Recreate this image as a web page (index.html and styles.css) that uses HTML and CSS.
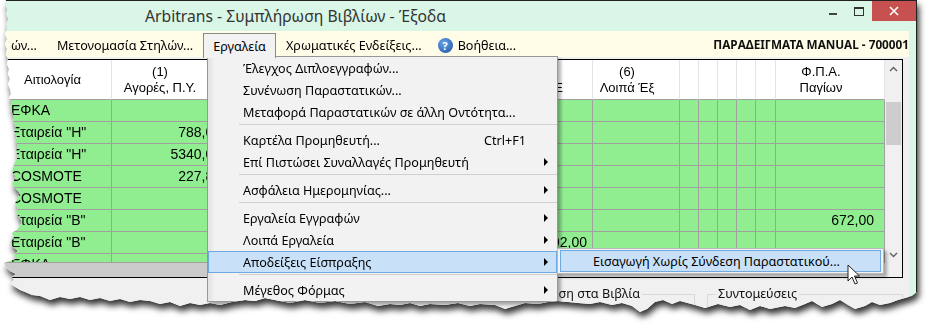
FILE: index.html
```html
<!DOCTYPE html>
<html>
<head>
    <meta charset="UTF-8">
    <title>Arbitrans - Συμπλήρωση Βιβλίων - Έξοδα</title>
    <link rel="stylesheet" href="styles.css">
</head>
<body>
<div class="shot">
    <div class="window">
        <div class="titlebar">
            <span class="title">Arbitrans - Συμπλήρωση Βιβλίων - Έξοδα</span>
            <div class="caption">
                <span class="cap_btn"><span class="min_icon"></span></span>
                <span class="cap_btn"><span class="max_icon"></span></span>
                <span class="cap_btn close">
                    <svg width="10" height="10" viewBox="0 0 10 10"><path d="M1 1 L9 9 M9 1 L1 9" stroke="#fff" stroke-width="1.6"/></svg>
                </span>
            </div>
        </div>
        <div class="client">
            <div class="menubar">
                <span class="mitem">ών...</span>
                <span class="mitem">Μετονομασία Στηλών...</span>
                <span class="mitem open">Εργαλεία</span>
                <span class="mitem">Χρωματικές Ενδείξεις...</span>
                <span class="mitem help"><span class="help_icon">?</span>Βοήθεια...</span>
                <span class="company">ΠΑΡΑΔΕΙΓΜΑΤΑ MANUAL - 700001</span>
            </div>
            <div class="grid">
                <div class="cells">
                    <div class="row head">
                        <div class="cell first">Αιτιολογία</div>
                        <div class="cell">(1)<br>Αγορές, Π.Υ.</div>
                        <div class="cell"></div>
                        <div class="cell tail"><span>&nbsp;<br>Ε</span></div>
                        <div class="cell">(6)<br>Λοιπά Έξ</div>
                        <div class="cell"></div>
                        <div class="cell"></div>
                        <div class="cell"></div>
                        <div class="cell"></div>
                        <div class="cell"></div>
                        <div class="cell">Φ.Π.Α.<br>Παγίων</div>
                    </div>
                    <div class="row">
                        <div class="cell txt">ΕΦΚΑ</div>
                        <div class="cell num"></div><div class="cell"></div><div class="cell"></div><div class="cell"></div>
                        <div class="cell"></div><div class="cell"></div><div class="cell"></div><div class="cell"></div><div class="cell"></div>
                        <div class="cell num"></div>
                    </div>
                    <div class="row">
                        <div class="cell txt">Εταιρεία "Η"</div>
                        <div class="cell num">788,00</div><div class="cell"></div><div class="cell"></div><div class="cell"></div>
                        <div class="cell"></div><div class="cell"></div><div class="cell"></div><div class="cell"></div><div class="cell"></div>
                        <div class="cell num"></div>
                    </div>
                    <div class="row">
                        <div class="cell txt">Εταιρεία "Η"</div>
                        <div class="cell num">5340,00</div><div class="cell"></div><div class="cell"></div><div class="cell"></div>
                        <div class="cell"></div><div class="cell"></div><div class="cell"></div><div class="cell"></div><div class="cell"></div>
                        <div class="cell num"></div>
                    </div>
                    <div class="row">
                        <div class="cell txt">COSMOTE</div>
                        <div class="cell num">227,80</div><div class="cell"></div><div class="cell"></div><div class="cell"></div>
                        <div class="cell"></div><div class="cell"></div><div class="cell"></div><div class="cell"></div><div class="cell"></div>
                        <div class="cell num"></div>
                    </div>
                    <div class="row">
                        <div class="cell txt">COSMOTE</div>
                        <div class="cell num"></div><div class="cell"></div><div class="cell"></div><div class="cell"></div>
                        <div class="cell"></div><div class="cell"></div><div class="cell"></div><div class="cell"></div><div class="cell"></div>
                        <div class="cell num"></div>
                    </div>
                    <div class="row">
                        <div class="cell txt">Εταιρεία "B"</div>
                        <div class="cell num"></div><div class="cell"></div><div class="cell"></div><div class="cell"></div>
                        <div class="cell"></div><div class="cell"></div><div class="cell"></div><div class="cell"></div><div class="cell"></div>
                        <div class="cell num last">672,00</div>
                    </div>
                    <div class="row">
                        <div class="cell txt">Εταιρεία "B"</div>
                        <div class="cell num"></div><div class="cell"></div><div class="cell num">1392,00</div><div class="cell"></div>
                        <div class="cell"></div><div class="cell"></div><div class="cell"></div><div class="cell"></div><div class="cell"></div>
                        <div class="cell num"></div>
                    </div>
                    <div class="row part">
                        <div class="cell txt">ΕΦΚΑ</div>
                        <div class="cell"></div><div class="cell"></div><div class="cell"></div><div class="cell"></div>
                        <div class="cell"></div><div class="cell"></div><div class="cell"></div><div class="cell"></div><div class="cell"></div>
                        <div class="cell"></div>
                    </div>
                    <div class="hscroll"><span class="hthumb"></span></div>
                </div>
                <div class="vscroll">
                    <span class="sarrow">
                        <svg width="9" height="6" viewBox="0 0 9 6"><path d="M1 5 L4.5 1.5 L8 5" fill="none" stroke="#606060" stroke-width="1.4"/></svg>
                    </span>
                    <span class="track"><span class="vthumb"></span></span>
                    <span class="sarrow">
                        <svg width="9" height="6" viewBox="0 0 9 6"><path d="M1 1 L4.5 4.5 L8 1" fill="none" stroke="#606060" stroke-width="1.4"/></svg>
                    </span>
                    <span class="corner"></span>
                </div>
            </div>
            <div class="lower">
                <div class="group left_grp">
                    <span class="legend">Καταχώρηση στα Βιβλία</span>
                    <span class="textbox"></span>
                </div>
                <div class="group right_grp">
                    <span class="legend">Συντομεύσεις</span>
                </div>
            </div>
        </div>

        <div class="dropdown">
            <div class="ditem">Έλεγχος Διπλοεγγραφών...</div>
            <div class="ditem">Συνένωση Παραστατικών...</div>
            <div class="ditem">Μεταφορά Παραστατικών σε άλλη Οντότητα...</div>
            <div class="sep"></div>
            <div class="ditem">Καρτέλα Προμηθευτή...<span class="shortcut">Ctrl+F1</span></div>
            <div class="ditem">Επί Πιστώσει Συναλλαγές Προμηθευτή<span class="arrow"></span></div>
            <div class="sep"></div>
            <div class="ditem">Ασφάλεια Ημερομηνίας...<span class="arrow"></span></div>
            <div class="sep"></div>
            <div class="ditem">Εργαλεία Εγγραφών<span class="arrow"></span></div>
            <div class="ditem">Λοιπά Εργαλεία<span class="arrow"></span></div>
            <div class="ditem hot">Αποδείξεις Είσπραξης<span class="arrow"></span></div>
            <div class="sep"></div>
            <div class="ditem">Μέγεθος Φόρμας<span class="arrow"></span></div>
        </div>

        <div class="submenu">
            <div class="ditem hot">Εισαγωγή Χωρίς Σύνδεση Παραστατικού...</div>
        </div>

        <svg class="pointer" width="14" height="22" viewBox="0 0 14 22">
            <path d="M1 1 L1 17 L5 13 L8 20 L10.5 19 L7.5 12 L12.5 12 Z" fill="#fff" stroke="#222" stroke-width="1"/>
        </svg>
    </div>
</div>
</body>
</html>
```

FILE: styles.css
```css
body{
    margin: 0;
    background-color: #ffffff;
    font-family: "Noto Sans", "Open Sans", sans-serif;
}
.shot{
    width: 920px;
    height: 327px;
    filter: drop-shadow(2px 5px 3px rgba(0, 0, 0, 0.8));
}
.window{
    position: relative;
    width: 917px;
    height: 318px;
    box-sizing: border-box;
    border-top: 1px solid #222;
    border-right: 1px solid #222;
    background-color: #d9f6e6;
    clip-path: polygon(6px 0, 917px 0, 917px 292px, 912px 296px, 905px 298px, 898px 300px, 890px 303px, 880px 305px, 872px 302px, 865px 306px, 855px 309px, 848px 305px, 840px 300px, 832px 304px, 822px 307px, 812px 301px, 805px 304px, 795px 308px, 785px 306px, 770px 309px, 760px 306px, 750px 310px, 740px 305px, 730px 307px, 718px 304px, 705px 308px, 695px 305px, 680px 301px, 672px 304px, 663px 300px, 655px 302px, 647px 309px, 640px 312px, 632px 306px, 622px 303px, 612px 305px, 600px 302px, 590px 304px, 578px 303px, 568px 302px, 558px 301px, 548px 302px, 538px 304px, 525px 303px, 515px 306px, 505px 309px, 495px 305px, 480px 304px, 470px 306px, 458px 303px, 445px 305px, 430px 304px, 420px 306px, 410px 303px, 400px 305px, 390px 304px, 378px 306px, 365px 302px, 350px 304px, 335px 301px, 320px 303px, 305px 300px, 290px 303px, 275px 300px, 265px 298px, 255px 301px, 245px 300px, 232px 302px, 220px 305px, 210px 303px, 200px 305px, 190px 303px, 180px 306px, 170px 302px, 160px 304px, 150px 301px, 140px 300px, 130px 302px, 120px 299px, 110px 301px, 100px 298px, 90px 300px, 80px 297px, 70px 299px, 60px 297px, 50px 300px, 40px 296px, 32px 295px, 25px 292px, 20px 290px, 12px 285px, 10px 283px, 14px 280px, 12px 277px, 16px 274px, 10px 271px, 6px 267px, 4px 263px, 10px 261px, 16px 259px, 14px 255px, 18px 251px, 12px 246px, 10px 242px, 14px 238px, 12px 233px, 18px 229px, 22px 222px, 19px 217px, 16px 213px, 18px 208px, 15px 204px, 17px 199px, 20px 193px, 16px 189px, 12px 184px, 14px 180px, 16px 176px, 12px 172px, 13px 168px, 15px 162px, 18px 157px, 16px 151px, 18px 146px, 15px 141px, 17px 136px, 14px 131px, 16px 127px, 13px 121px, 14px 117px, 12px 112px, 10px 107px, 12px 103px, 9px 98px, 11px 94px, 10px 89px, 8px 84px, 10px 79px, 8px 74px, 9px 69px, 7px 64px, 8px 59px, 6px 54px, 7px 49px, 5px 44px, 7px 39px, 5px 34px, 7px 29px, 6px 24px, 8px 19px, 6px 14px, 7px 9px, 5px 4px);
}

/* title bar */
.titlebar{
    display: flex;
    height: 30px;
}
.title{
    padding-left: 145px;
    line-height: 30px;
    font-size: 15.7px;
    color: #333;
}
.caption{
    margin-left: auto;
    display: flex;
    height: 20px;
}
.cap_btn{
    width: 26px;
    display: flex;
    align-items: center;
    justify-content: center;
}
.cap_btn.close{
    width: 44px;
    background-color: #c75050;
}
.min_icon{
    width: 8px;
    height: 2px;
    margin-top: 6px;
    background-color: #444;
}
.max_icon{
    width: 8px;
    height: 6px;
    border: 1px solid #333;
    border-top-width: 2px;
}

/* client */
.client{
    margin-right: 7px;
    height: 300px;
    background-color: #f0f0f0;
}
.menubar{
    display: flex;
    align-items: flex-start;
    height: 26px;
    box-sizing: border-box;
    padding: 2px 0 0 1px;
    background-color: #fffde8;
    font-size: 12.6px;
}
.mitem{
    display: flex;
    align-items: center;
    height: 24px;
    padding: 0 9px;
    box-sizing: border-box;
    border: 1px solid transparent;
    border-bottom: none;
    color: #000;
}
.mitem.open{
    position: relative;
    z-index: 3;
    height: 25px;
    border-color: #8a8a8a;
    background-color: #f2f2f2;
}
.mitem.help{
    padding-left: 5px;
}
.help_icon{
    width: 15px;
    height: 15px;
    margin-right: 5px;
    border-radius: 50%;
    background: radial-gradient(circle at 40% 35%, #6aa6ee, #1a4c9c);
    color: #fff;
    font-weight: bold;
    font-size: 11px;
    line-height: 15px;
    text-align: center;
}
.company{
    margin-left: auto;
    line-height: 22px;
    font-weight: bold;
    font-size: 11.75px;
    color: #111;
}

/* grid */
.grid{
    display: flex;
    width: 903px;
    height: 219px;
    margin-top: 2px;
    box-sizing: border-box;
    border: 1px solid #000;
    border-left: none;
    font-family: "Liberation Sans", Arial, sans-serif;
    font-size: 14px;
}
.cells{
    width: 885px;
    display: flex;
    flex-direction: column;
}
.row{
    display: grid;
    grid-template-columns: 112px 115px 252px 114px 87px 19px 19px 19px 19px 20px 109px;
    height: 22px;
    background-color: #90ee90;
}
.cell{
    box-sizing: border-box;
    border-right: 1px solid #a0a0a0;
    border-bottom: 1px solid #a0a0a0;
    line-height: 21px;
    white-space: nowrap;
    overflow: hidden;
}
.txt{
    padding-left: 11px;
}
.num{
    text-align: right;
    padding-right: 5px;
}
.num.last{
    padding-right: 10px;
}
.row.head{
    height: 40px;
    background-color: #fff;
    font-size: 13px;
}
.head .cell{
    display: flex;
    align-items: center;
    justify-content: center;
    padding-right: 18px;
    line-height: 16px;
    text-align: center;
    border-right-color: #e4e4e4;
    border-bottom-color: #a0a0a0;
}
.head .cell.first{
    padding-right: 6px;
}
.head .cell.tail{
    justify-content: flex-end;
    padding-right: 29px;
    text-align: right;
}
.row.part{
    height: 9px;
}
.hscroll{
    height: 14px;
    background-color: #f0f0f0;
}
.hthumb{
    display: block;
    width: 330px;
    height: 14px;
    background-color: #cbcbcb;
}
.vscroll{
    width: 17px;
    display: flex;
    flex-direction: column;
    background-color: #f0f0f0;
}
.sarrow{
    height: 17px;
    display: flex;
    align-items: center;
    justify-content: center;
}
.track{
    flex: 1;
}
.vthumb{
    display: block;
    height: 43px;
    margin: 25px 1px 0;
    background-color: #cdcdcd;
}
.corner{
    height: 14px;
}

/* lower part of the form */
.lower{
    display: flex;
    padding-top: 16px;
    font-size: 12.6px;
}
.group{
    height: 40px;
    box-sizing: border-box;
    border: 1px solid #d8d8d8;
}
.left_grp{
    margin-left: 430px;
    width: 265px;
}
.right_grp{
    margin-left: 12px;
    width: 196px;
}
.legend{
    display: inline-block;
    margin: -9px 0 0 8px;
    padding: 0 2px;
    background-color: #f0f0f0;
    line-height: 16px;
    vertical-align: top;
    color: #111;
}
.left_grp .legend{
    margin-left: 64px;
}
.textbox{
    display: block;
    width: 53px;
    height: 20px;
    margin: 2px 0 0 209px;
    border: 1px solid #7a7a7a;
    background-color: #fff;
}

/* popup menus */
.dropdown{
    position: absolute;
    left: 207px;
    top: 55px;
    z-index: 2;
    width: 351px;
    box-sizing: border-box;
    border: 1px solid #979797;
    background: linear-gradient(to right, #e2e2e2, #f2f2f2 7px);
    box-shadow: 3px 3px 3px rgba(0, 0, 0, 0.3);
    font-size: 12.6px;
}
.ditem{
    display: flex;
    align-items: center;
    height: 22px;
    box-sizing: border-box;
    padding-left: 34px;
    border: 1px solid transparent;
    color: #000;
    white-space: nowrap;
}
.ditem.hot{
    background-color: #c9e1f8;
    border-color: #6ea9e4;
}
.sep{
    height: 6px;
    box-sizing: border-box;
    margin-left: 31px;
    padding-top: 1px;
    border-bottom: 4px solid transparent;
    background-clip: content-box;
    background-color: #d0d0d0;
}
.shortcut{
    margin-left: auto;
    margin-right: 30px;
}
.arrow{
    margin-left: auto;
    margin-right: 8px;
    width: 0;
    height: 0;
    border-left: 4px solid #000;
    border-top: 4px solid transparent;
    border-bottom: 4px solid transparent;
}
.submenu{
    position: absolute;
    left: 557px;
    top: 247px;
    z-index: 4;
    width: 327px;
    padding: 1px 2px;
    box-sizing: border-box;
    border: 1px solid #b8b8b8;
    background-color: #f2f2f2;
    box-shadow: 3px 3px 3px rgba(0, 0, 0, 0.3);
    font-size: 12.6px;
}
.submenu .ditem{
    padding-left: 32px;
}
.pointer{
    position: absolute;
    left: 847px;
    top: 263px;
    z-index: 5;
}
```
